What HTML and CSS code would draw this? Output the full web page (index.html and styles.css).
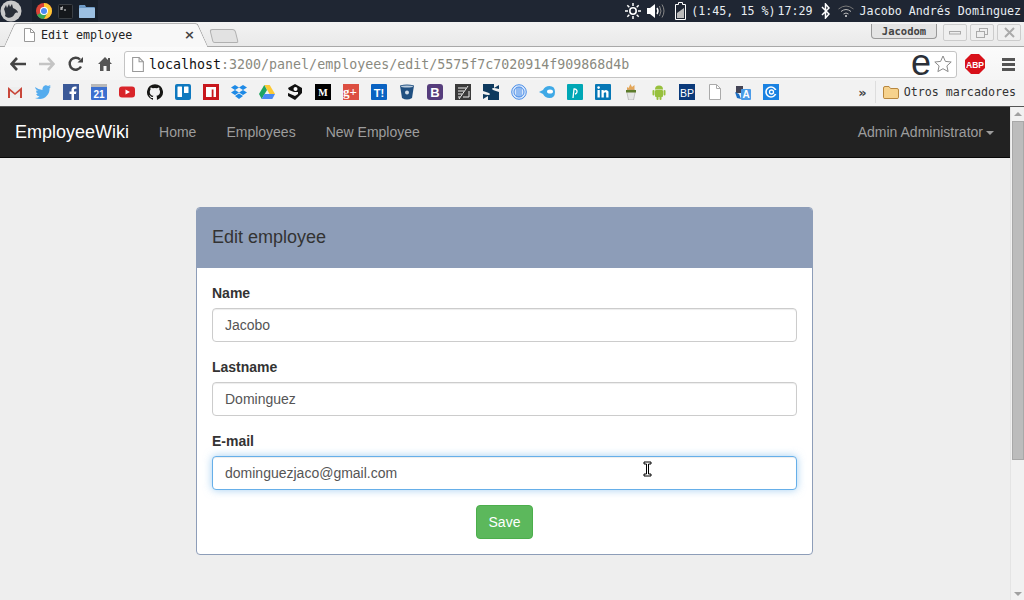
FILE: index.html
```html
<!DOCTYPE html>
<html>
<head>
  <title>Edit employee</title>
  <link rel="stylesheet" href="styles.css">
</head>
<body>
  <!-- desktop panel -->
  <div class="os-panel">
    <svg class="os-logo" width="22" height="22" viewBox="0 0 22 22"><circle cx="11" cy="11" r="10.5" fill="#c9c9c9"/><path d="M4 9l2-4 1 3 2-4 1 3 2-3 1 4c3 1 5 3 5 5-2-1-3 0-4 2-2 3-6 4-9 1 1-2 0-4-1-7z" fill="#2a2f38"/></svg>
    <div class="launcher">
      <svg width="16" height="16" viewBox="0 0 16 16"><circle cx="8" cy="8" r="8" fill="#db4437"/><path d="M8 8L1 12a8 8 0 0 0 7 4l4-7z" fill="#3aa757"/><path d="M8 0a8 8 0 0 1 8 8 8 8 0 0 1-8 8l4-7-4-5z" fill="#fcc934"/><circle cx="8" cy="8" r="4" fill="#fff"/><circle cx="8" cy="8" r="3" fill="#4a8af4"/></svg>
      <svg width="15" height="15" viewBox="0 0 15 15"><rect x=".5" y=".5" width="14" height="14" rx="1" fill="#15181c" stroke="#3a3f45"/><path d="M3 3v3M5 3h-1v3M6 6h2" stroke="#ddd" fill="none"/></svg>
      <svg width="16" height="14" viewBox="0 0 16 14"><path d="M0 2q0-1 1-1h5l1 2h8q1 0 1 1v9q0 1-1 1H1q-1 0-1-1z" fill="#6d9ac6"/><rect y="4" width="16" height="10" rx="1" fill="#9cc0e2"/></svg>
    </div>
    <div class="tray">
      <svg width="16" height="16" viewBox="0 0 16 16"><circle cx="8" cy="8" r="3.2" fill="none" stroke="#fff" stroke-width="1.6"/><path d="M8 0v3M8 13v3M0 8h3M13 8h3M2.3 2.3l2 2M11.7 11.7l2 2M2.3 13.7l2-2M11.7 4.3l2-2" stroke="#fff" stroke-width="1.5"/></svg>
      <svg class="tray-vol" width="18" height="16" viewBox="0 0 18 16"><path d="M0 5h3l5-4v14l-5-4H0z" fill="#fff"/><path d="M10 5q2 3 0 6" stroke="#fff" fill="none" stroke-width="1.4"/><path d="M12.500 3q3 5 0 10M15 1.500q4 6.500 0 13" stroke="#888" fill="none"/></svg>
      <svg class="tray-bat" width="11" height="18" viewBox="0 0 11 18"><path d="M3.500.5h4v2h3v15H.5v-15h3z" fill="none" stroke="#fff"/><path d="M2 11l7-5v10H2z" fill="#bbb"/></svg>
      <span class="tray-text bat-text">(1:45, 15 %)</span>
      <span class="tray-text clock">17:29</span>
      <svg class="tray-bt" width="9" height="16" viewBox="0 0 9 16"><path d="M1 4l7 7-3.500 4V1L8 5l-7 7" fill="none" stroke="#fff" stroke-width="1.500"/></svg>
      <svg class="tray-wifi" width="16" height="12" viewBox="0 0 16 12"><path d="M.5 4q7.500-6 15 0" stroke="#777" fill="none"/><path d="M3 6.500q5-4 10 0M5.500 9q2.500-2 5 0" stroke="#bbb" fill="none"/><circle cx="8" cy="11" r="1" fill="#ddd"/></svg>
      <span class="tray-text user-name">Jacobo Andrés Dominguez</span>
    </div>
  </div>

  <!-- browser chrome -->
  <div class="tab-strip">
    <div class="tab">
      <svg width="11" height="14" viewBox="0 0 11 14"><path d="M.5.5h6l4 4v9H.5z" fill="#fff" stroke="#999"/><path d="M6.500.5v4h4" fill="none" stroke="#999"/></svg>
      <span class="tab-title">Edit employee</span>
      <span class="tab-close">×</span>
    </div>
    <div class="new-tab"></div>
    <div class="window-btns">
      <span class="profile">Jacodom</span>
      <span class="win-btn"><svg width="12" height="4" viewBox="0 0 12 4"><rect x=".5" y=".5" width="11" height="2.500" fill="#eee" stroke="#aaa"/></svg></span>
      <span class="win-btn"><svg width="12" height="10" viewBox="0 0 12 10"><rect x="3.500" y=".5" width="8" height="6" fill="none" stroke="#aaa"/><rect x=".5" y="3.500" width="8" height="6" fill="#eee" stroke="#aaa"/></svg></span>
      <span class="win-btn"><svg width="11" height="11" viewBox="0 0 11 11"><path d="M1 1l9 9M10 1l-9 9" stroke="#aaa" stroke-width="2"/></svg></span>
    </div>
  </div>

  <div class="toolbar">
    <svg class="nav-ic" width="16" height="14" viewBox="0 0 16 14"><path d="M7 1L1.500 7 7 13M2 7h14" fill="none" stroke="#444" stroke-width="2.600"/></svg>
    <svg class="nav-ic" width="16" height="14" viewBox="0 0 16 14"><path d="M9 1l5.500 6L9 13M14 7H0" fill="none" stroke="#c4c4c4" stroke-width="2.600"/></svg>
    <svg class="nav-ic" width="16" height="16" viewBox="0 0 16 16"><path d="M13 10.500A6 6 0 1 1 12 3.500" fill="none" stroke="#444" stroke-width="2.400"/><path d="M9.500 6.500H15V1z" fill="#444"/></svg>
    <svg class="nav-ic" width="14" height="14" viewBox="0 0 14 14"><path d="M7 0L0 7h2v7h3.500V9h3v5H12V7h2l-2-2V1h-2v2z" fill="#555"/></svg>
    <div class="omnibox">
      <svg width="12" height="15" viewBox="0 0 11 14"><path d="M.5.5h6l4 4v9H.5z" fill="#fff" stroke="#999"/><path d="M6.500.5v4h4" fill="none" stroke="#999"/></svg>
      <span class="url"><b>localhost</b>:3200/panel/employees/edit/5575f7c7020914f909868d4b</span>
      <span class="ext-e">e</span>
      <svg width="18" height="18" viewBox="0 0 18 18"><path d="M9 1l2.400 5.400 5.800.6-4.300 3.900 1.200 5.700L9 13.700l-5.100 2.900 1.200-5.700L.8 7l5.800-.6z" fill="#fff" stroke="#8a8a8a"/></svg>
    </div>
    <svg class="abp" width="20" height="20" viewBox="0 0 20 20"><path d="M6 0h8l6 6v8l-6 6H6l-6-6V6z" fill="#d8111a"/><text x="10" y="13.500" class="abp-text">ABP</text></svg>
    <div class="menu-ic"><i></i><i></i><i></i></div>
  </div>

  <div class="bookmarks">
    <svg class="bm" viewBox="0 0 16 16"><path d="M1 3h14v11H1z" fill="#eee"/><path d="M1 14V3l7 6 7-6v11h-2V7L8 11 3 7v7z" fill="#c9473a"/></svg>
    <svg class="bm" viewBox="0 0 16 16"><path d="M0 3q4 3 7.500 3C7 3 10 0 13 2l2.500-1-1 2 1.500-.5-1.500 2C15 10 10 15 5 15q-3 0-5-1 3 0 4.500-1.500Q2 12 1 10h2Q1 9 1 6.500l2 .5Q0 5 0 3z" fill="#55acee"/></svg>
    <svg class="bm" viewBox="0 0 16 16"><rect width="16" height="16" fill="#3b5998"/><path d="M11 16V10h2l.4-2.500H11V6q0-1.200 1.300-1.200h1.200V2.600q-4.500-.8-5 3v1.900H6.500V10h2v6z" fill="#fff"/></svg>
    <svg class="bm" viewBox="0 0 16 16"><rect width="16" height="16" rx="1" fill="#3b6fd0"/><rect width="16" height="3" fill="#b8b8b8"/><text x="8" y="13.500" class="bm-num">21</text></svg>
    <svg class="bm" viewBox="0 0 16 16"><rect y="2.500" width="16" height="11" rx="3" fill="#d9252a"/><path d="M6.500 5.500L11 8l-4.500 2.500z" fill="#fff"/></svg>
    <svg class="bm" viewBox="0 0 16 16"><path d="M8 .2a8 8 0 0 0-2.500 15.600c.4 0 .5-.2.500-.4v-1.400c-2.200.5-2.700-1-2.700-1-.4-.9-.9-1.200-.9-1.200-.7-.5 0-.5 0-.5.800.1 1.200.8 1.200.8.700 1.200 1.900.9 2.300.7.100-.5.300-.9.500-1.100-1.800-.2-3.600-.9-3.600-4 0-.9.300-1.600.8-2.100-.1-.2-.4-1 .1-2.100 0 0 .7-.2 2.200.8a7.600 7.600 0 0 1 4 0c1.500-1 2.200-.8 2.200-.8.500 1.100.2 1.900.1 2.100.5.500.8 1.200.8 2.100 0 3.100-1.900 3.800-3.700 4 .3.300.6.800.6 1.500v2.200c0 .2.100.5.600.4A8 8 0 0 0 8 .2z" fill="#161614"/></svg>
    <svg class="bm" viewBox="0 0 16 16"><rect width="16" height="16" rx="2" fill="#0f79bf"/><rect x="2.500" y="2.500" width="4.500" height="10.500" rx=".5" fill="#fff"/><rect x="9" y="2.500" width="4.500" height="6.500" rx=".5" fill="#fff"/></svg>
    <svg class="bm" viewBox="0 0 16 16"><rect width="16" height="16" fill="#c8181e"/><path d="M3 3h10v10h-2.500V5.500H8.700V13H3z" fill="#fff"/></svg>
    <svg class="bm" viewBox="0 0 16 16"><path d="M4 1l4 2.500L4 6 0 3.500zM12 1l4 2.500L12 6 8 3.500zM4 6l4 2.500L4 11 0 8.500zM12 6l4 2.500L12 11 8 8.500zM4 12l4-2.500 4 2.500-4 3z" fill="#1e8ae6"/></svg>
    <svg class="bm" viewBox="0 0 16 16"><path d="M5.300 1h5.400L16 10h-5.400z" fill="#fcc934"/><path d="M5.300 1L0 10l2.700 5 5.300-9z" fill="#1fa463"/><path d="M2.700 15h10.600L16 10H5.400z" fill="#4a8af4"/></svg>
    <svg class="bm" viewBox="0 0 16 16"><path d="M1 4l7-4 7 4v5L8 16l-7-4V9l7 3 3-2V8H7L2 6z" fill="#111"/><circle cx="8.500" cy="5" r="2" fill="#fff"/></svg>
    <svg class="bm" viewBox="0 0 16 16"><rect width="16" height="16" fill="#000"/><text x="8" y="12" class="bm-m">M</text></svg>
    <svg class="bm" viewBox="0 0 16 16"><rect width="16" height="16" fill="#dc4e41"/><text x="0" y="12" class="bm-g">g+</text></svg>
    <svg class="bm" viewBox="0 0 16 16"><rect width="16" height="16" rx="1" fill="#0a63c2"/><text x="8" y="12.500" class="bm-t">T!</text></svg>
    <svg class="bm" viewBox="0 0 16 16"><path d="M1 1.500q7-2 14 0L13 14q-5 3-10 0z" fill="#205081"/><ellipse cx="8" cy="2.500" rx="6" ry="1" fill="#bcd"/><circle cx="8" cy="8.500" r="2" fill="#d0dde9"/></svg>
    <svg class="bm" viewBox="0 0 16 16"><rect width="16" height="16" rx="3" fill="#563d7c"/><text x="8" y="13" class="bm-b">B</text></svg>
    <svg class="bm" viewBox="0 0 16 16"><rect width="16" height="16" fill="#3a3a3a"/><path d="M3 4h8M3 7h6M3 10h4M3 13h2M13 2L4 15M8 13h6V7" stroke="#eee" fill="none"/></svg>
    <svg class="bm" viewBox="0 0 16 16"><path d="M0 0h11v4l5-3v4q-7-2-7 0 0 1 7 3v8H5v-4l-5 3v-5q7 2 7 0 0-1-7-3z" fill="#0e3a5e"/></svg>
    <svg class="bm" viewBox="0 0 16 16"><circle cx="8" cy="8" r="7.300" fill="#d8e6fa" stroke="#4a8ee8"/><circle cx="8" cy="8" r="5" fill="none" stroke="#4a8ee8"/><path d="M6 3.500v9M8 3v10M10 3.500v9" stroke="#4a8ee8"/></svg>
    <svg class="bm" viewBox="0 0 16 16"><path d="M0 8l4-2q2-4 6.500-4 5.500 0 5.500 6t-5.500 6Q6 14 4 10z" fill="#3fa9e6"/><ellipse cx="11" cy="7.500" rx="3" ry="2" fill="#fff"/></svg>
    <svg class="bm" viewBox="0 0 16 16"><rect width="16" height="16" rx="1" fill="#00a7b5"/><path d="M6 14l1-9a2.500 2.500 0 1 1 1 5" fill="none" stroke="#fff" stroke-width="1.300"/></svg>
    <svg class="bm" viewBox="0 0 16 16"><rect width="16" height="16" rx="1" fill="#0677b5"/><path d="M2.500 6h2.300v7.500H2.500zM6.500 6h2.200v1q2.800-2.400 4.800.5v6h-2.300V9q-.5-1.700-2.400 0v4.500H6.500z" fill="#fff"/><circle cx="3.600" cy="3.600" r="1.300" fill="#fff"/></svg>
    <svg class="bm" viewBox="0 0 16 16"><path d="M4 3l1.500 1 2-4 1.500 3 2.500-2V6H4z" fill="#e4a75a"/><path d="M4 6h8v3l-1.500 7h-5L4 9z" fill="#e5e5e5" stroke="#999" stroke-width=".5"/><rect x="3" y="6" width="10" height="2.500" fill="#5e7d2c"/></svg>
    <svg class="bm" viewBox="0 0 16 16"><path d="M4 5.500a4 4 0 0 1 8 0z" fill="#97c03d"/><rect x="4" y="6" width="8" height="7" rx="1" fill="#97c03d"/><rect x="1.500" y="6" width="2" height="5.500" rx="1" fill="#97c03d"/><rect x="12.500" y="6" width="2" height="5.500" rx="1" fill="#97c03d"/><rect x="5.500" y="12" width="2" height="4" rx="1" fill="#97c03d"/><rect x="8.500" y="12" width="2" height="4" rx="1" fill="#97c03d"/></svg>
    <svg class="bm" viewBox="0 0 16 16"><rect width="16" height="16" fill="#0b3a7a"/><text x="8" y="12.500" class="bm-bp">BP</text></svg>
    <svg class="bm" viewBox="0 0 16 16"><path d="M2.500.5h7l4 4v11h-11z" fill="#fff" stroke="#aaa"/><path d="M9.500.5v4h4" fill="none" stroke="#aaa"/></svg>
    <svg class="bm" viewBox="0 0 16 16"><path d="M1 2h7v7H1z" fill="#445"/><path d="M0 8l4 2 2 5-4-1z" fill="#1c6fc4"/><rect x="6" y="5" width="10" height="11" rx="1" fill="#4a9be8"/><text x="11" y="14" class="bm-a">A</text></svg>
    <svg class="bm" viewBox="0 0 16 16"><rect width="16" height="16" fill="#1a82e2"/><circle cx="8" cy="8" r="5" fill="none" stroke="#fff" stroke-width="1.600"/><circle cx="8.500" cy="8" r="2" fill="none" stroke="#fff" stroke-width="1.300"/><path d="M12 6h3v4h-3z" fill="#1a82e2"/></svg>
    <span class="more">»</span>
    <span class="bm-sep"></span>
    <div class="other-bm">
      <svg width="16" height="13" viewBox="0 0 16 13"><path d="M.5 2Q.5.500 2 .500h4l1.500 2H14q1.500 0 1.500 1.500v7.500q0 1-1.500 1H2q-1.500 0-1.500-1z" fill="#f6d28d" stroke="#b8873f"/></svg>
      <span>Otros marcadores</span>
    </div>
  </div>

  <!-- page -->
  <div class="viewport">
    <div class="page">
      <nav class="navbar">
        <a class="brand">EmployeeWiki</a>
        <a class="nav-link">Home</a>
        <a class="nav-link">Employees</a>
        <a class="nav-link">New Employee</a>
        <a class="nav-link nav-user">Admin Administrator<span class="caret"></span></a>
      </nav>
      <div class="panel">
        <div class="panel-heading">Edit employee</div>
        <form class="panel-body">
          <div class="form-group">
            <label>Name</label>
            <input class="form-control" type="text" value="Jacobo">
          </div>
          <div class="form-group">
            <label>Lastname</label>
            <input class="form-control" type="text" value="Dominguez">
          </div>
          <div class="form-group">
            <label>E-mail</label>
            <input class="form-control focused" type="text" value="dominguezjaco@gmail.com">
          </div>
          <div class="actions">
            <button class="btn-save" type="button">Save</button>
          </div>
        </form>
      </div>
    </div>
    <div class="scrollbar">
      <span class="arrow-up"></span>
      <div class="thumb"></div>
      <span class="arrow-down"></span>
    </div>
    <svg class="ibeam" width="9" height="16" viewBox="0 0 9 16"><path d="M1 1h7v2H5.500v10H8v2H1v-2h2.500V3H1z" fill="#fff" stroke="#000"/></svg>
  </div>
</body>
</html>
```

FILE: styles.css
```css
* {
  margin: 0;
  padding: 0;
  box-sizing: border-box;
}

body {
  width: 1024px;
  height: 600px;
  overflow: hidden;
  font-family: "Liberation Sans", Arial, sans-serif;
  font-size: 14px;
  color: #333;
  background-color: #eee;
}

/* desktop panel */
.os-panel {
  height: 22px;
  display: flex;
  align-items: center;
  background-color: #1f2633;
  color: #fff;
}

.launcher {
  height: 22px;
  display: flex;
  align-items: center;
  gap: 6px;
  margin-left: 10px;
  padding: 0 3px 0 4px;
  background-color: #18202b;
}

.tray {
  display: flex;
  align-items: center;
  margin-left: auto;
  padding-right: 3px;
}

.tray-text {
  font-family: "DejaVu Sans Mono", monospace;
  font-size: 11.67px;
  color: #e8edf2;
  white-space: nowrap;
}

.tray-vol { margin-left: 6px; }
.tray-bat { margin-left: 10px; }
.bat-text { margin-left: 5px; }
.clock { margin-left: 2px; }
.tray-bt { margin-left: 8px; }
.tray-wifi { margin-left: 8px; }
.user-name { margin-left: 6px; }

/* tab strip */
.tab-strip {
  position: relative;
  height: 25px;
  display: flex;
  align-items: flex-end;
  background: linear-gradient(#f3f3f3, #e9e9e9);
  border-bottom: 1px solid #a8a8a8;
}

.tab {
  position: relative;
  width: 180px;
  height: 24px;
  margin-left: 16px;
  margin-bottom: -1px;
  padding-bottom: 2px;
  display: flex;
  align-items: center;
  background: #f8f8f8;
  border-top: 1px solid #b5b5b5;
  z-index: 1;
}

.tab::before,
.tab::after {
  content: "";
  position: absolute;
  top: -1px;
  bottom: 0;
  width: 14px;
  background: #f8f8f8;
  border-top: 1px solid #b5b5b5;
  z-index: -1;
}

.tab::before {
  left: -7px;
  transform: skewX(-24deg);
  border-left: 1px solid #a0a0a0;
  border-top-left-radius: 3px;
}

.tab::after {
  right: -7px;
  transform: skewX(24deg);
  border-right: 1px solid #a0a0a0;
  border-top-right-radius: 3px;
}

.tab svg {
  margin-left: 8px;
}

.tab-title {
  margin-left: 6px;
  font-family: "DejaVu Sans Mono", monospace;
  font-size: 11.67px;
  color: #222;
}

.tab-close {
  margin-left: auto;
  margin-right: 1px;
  font-family: "DejaVu Sans", sans-serif;
  font-size: 13px;
  font-weight: bold;
  line-height: 1;
  color: #444;
}

.new-tab {
  width: 26px;
  height: 14px;
  margin-left: 15px;
  margin-bottom: 3px;
  background: #e2e2e2;
  border: 1px solid #b0b0b0;
  border-radius: 3px 3px 2px 2px;
  transform: skewX(14deg);
}

.window-btns {
  display: flex;
  align-items: flex-start;
  gap: 3px;
  margin-left: auto;
  margin-right: 3px;
  align-self: flex-start;
  padding-top: 2px;
}

.profile {
  width: 66px;
  height: 15px;
  margin-right: 3px;
  text-align: center;
  font-family: "DejaVu Sans Mono", monospace;
  font-size: 10.5px;
  font-weight: bold;
  line-height: 14px;
  color: #444;
  background: #e4e4e4;
  border: 1px solid #999;
  border-top: 0;
  border-radius: 0 0 4px 4px;
}

.win-btn {
  width: 24px;
  height: 17px;
  display: flex;
  align-items: center;
  justify-content: center;
  background: #efefef;
  border: 1px solid #ccc;
  border-radius: 2px;
}

/* toolbar */
.toolbar {
  height: 33px;
  padding-top: 1px;
  display: flex;
  align-items: center;
  background: linear-gradient(#fbfbfb, #f5f5f5);
}

.nav-ic {
  flex: none;
}

.toolbar .nav-ic:nth-child(1) { margin-left: 10px; }
.toolbar .nav-ic:nth-child(2) { margin-left: 13px; }
.toolbar .nav-ic:nth-child(3) { margin-left: 13px; }
.toolbar .nav-ic:nth-child(4) { margin-left: 14px; }

.omnibox {
  width: 833px;
  height: 27px;
  margin-left: 12px;
  padding-left: 7px;
  padding-right: 4px;
  display: flex;
  align-items: center;
  background: #fff;
  border: 1px solid #c4c4c4;
  border-radius: 3px;
}

.url {
  margin-left: 5px;
  padding-top: 1px;
  font-family: "DejaVu Sans Mono", monospace;
  font-size: 13.3px;
  color: #8a8a80;
  white-space: nowrap;
}

.url b {
  font-weight: normal;
  color: #111;
}

.ext-e {
  margin-left: auto;
  margin-right: 3px;
  margin-top: -3px;
  font-size: 36px;
  line-height: 25px;
  height: 25px;
  color: #2b3038;
}

.abp {
  margin-left: 8px;
  flex: none;
}

.abp-text {
  font: bold 8.500px "Liberation Sans", sans-serif;
  fill: #fff;
  text-anchor: middle;
}

.menu-ic {
  margin-left: 17px;
  display: flex;
  flex-direction: column;
  gap: 2px;
}

.menu-ic i {
  display: block;
  width: 13px;
  height: 3px;
  background: #555;
}

/* bookmarks */
.bookmarks {
  height: 27px;
  padding-left: 7px;
  padding-right: 8px;
  padding-bottom: 2px;
  display: flex;
  align-items: center;
  gap: 12px;
  background: #f2f2f2;
  border-bottom: 1px solid #555;
}

.bm {
  width: 16px;
  height: 16px;
  flex: none;
}

.bm text {
  font-family: "Liberation Sans", sans-serif;
  font-weight: bold;
  fill: #fff;
  text-anchor: middle;
}

.bm .bm-num { font-size: 10px; }
.bm .bm-m { font-size: 10px; font-family: "Liberation Serif", serif; }
.bm .bm-g { font-size: 13px; font-family: "Liberation Serif", serif; text-anchor: start; }
.bm .bm-t { font-size: 11px; }
.bm .bm-b { font-size: 13px; }
.bm .bm-bp { font-size: 10.500px; font-weight: normal; }
.bm .bm-a { font-size: 10px; }

.more {
  margin-left: auto;
  font-family: "DejaVu Sans", sans-serif;
  font-size: 13px;
  font-weight: bold;
  color: #444;
}

.bm-sep {
  width: 1px;
  height: 22px;
  margin-left: -4px;
  background: #ddd;
}

.other-bm {
  display: flex;
  align-items: center;
  gap: 5px;
  margin-left: -5px;
  font-family: "DejaVu Sans Mono", monospace;
  font-size: 11.67px;
  color: #333;
  white-space: nowrap;
}

/* page */
.viewport {
  position: relative;
  height: 493px;
  display: flex;
}

.page {
  flex: 1;
  background-color: #eee;
}

.navbar {
  height: 51px;
  padding-left: 15px;
  padding-right: 16px;
  display: flex;
  align-items: center;
  background-color: #222;
  border-bottom: 1px solid #080808;
}

.brand {
  font-size: 18px;
  color: #fff;
  margin-right: 15px;
}

.nav-link {
  padding: 0 15px;
  color: #9d9d9d;
}

.nav-user {
  margin-left: auto;
  padding: 0;
}

.caret {
  display: inline-block;
  margin-left: 3px;
  vertical-align: middle;
  border-top: 4px solid #9d9d9d;
  border-left: 4px solid transparent;
  border-right: 4px solid transparent;
}

.panel {
  width: 617px;
  height: 348px;
  margin: 49px 0 0 196px;
  background: #fff;
  border: 1px solid #8d9db8;
  border-radius: 4px;
  overflow: hidden;
}

.panel-heading {
  height: 60px;
  padding-left: 15px;
  font-size: 18px;
  line-height: 58px;
  background-color: #8d9db8;
  color: #333;
}

.panel-body {
  padding: 15px;
}

.form-group {
  margin-bottom: 15px;
}

.form-group label {
  display: block;
  height: 20px;
  margin-bottom: 5px;
  font-weight: bold;
  line-height: 20px;
}

.form-control {
  display: block;
  width: 100%;
  height: 34px;
  padding: 6px 12px;
  font-family: inherit;
  font-size: 14px;
  color: #555;
  background: #fff;
  border: 1px solid #ccc;
  border-radius: 4px;
  box-shadow: inset 0 1px 1px rgba(0, 0, 0, 0.075);
}

.focused {
  border-color: #66afe9;
  box-shadow: inset 0 1px 1px rgba(0, 0, 0, 0.075), 0 0 8px rgba(102, 175, 233, 0.6);
}

.actions {
  text-align: center;
}

.btn-save {
  width: 57px;
  height: 34px;
  font-family: inherit;
  font-size: 14px;
  color: #fff;
  background-color: #5cb85c;
  border: 1px solid #4cae4c;
  border-radius: 4px;
}

/* scrollbar */
.scrollbar {
  width: 14px;
  flex: none;
  padding: 0 1px;
  display: flex;
  flex-direction: column;
  align-items: center;
  background: #f1f1f1;
  border-left: 1px solid #e4e4e4;
}

.arrow-up,
.arrow-down {
  width: 0;
  height: 0;
  border-left: 4px solid transparent;
  border-right: 4px solid transparent;
}

.arrow-up {
  margin-top: 5px;
  border-bottom: 4px solid #a0a0a0;
}

.arrow-down {
  margin-top: auto;
  margin-bottom: 4px;
  border-top: 4px solid #a0a0a0;
}

.thumb {
  width: 12px;
  height: 339px;
  margin-top: 5px;
  background: #bcbcbc;
  border: 1px solid #a8a8a8;
}

.ibeam {
  position: absolute;
  left: 643px;
  top: 354px;
}
```
